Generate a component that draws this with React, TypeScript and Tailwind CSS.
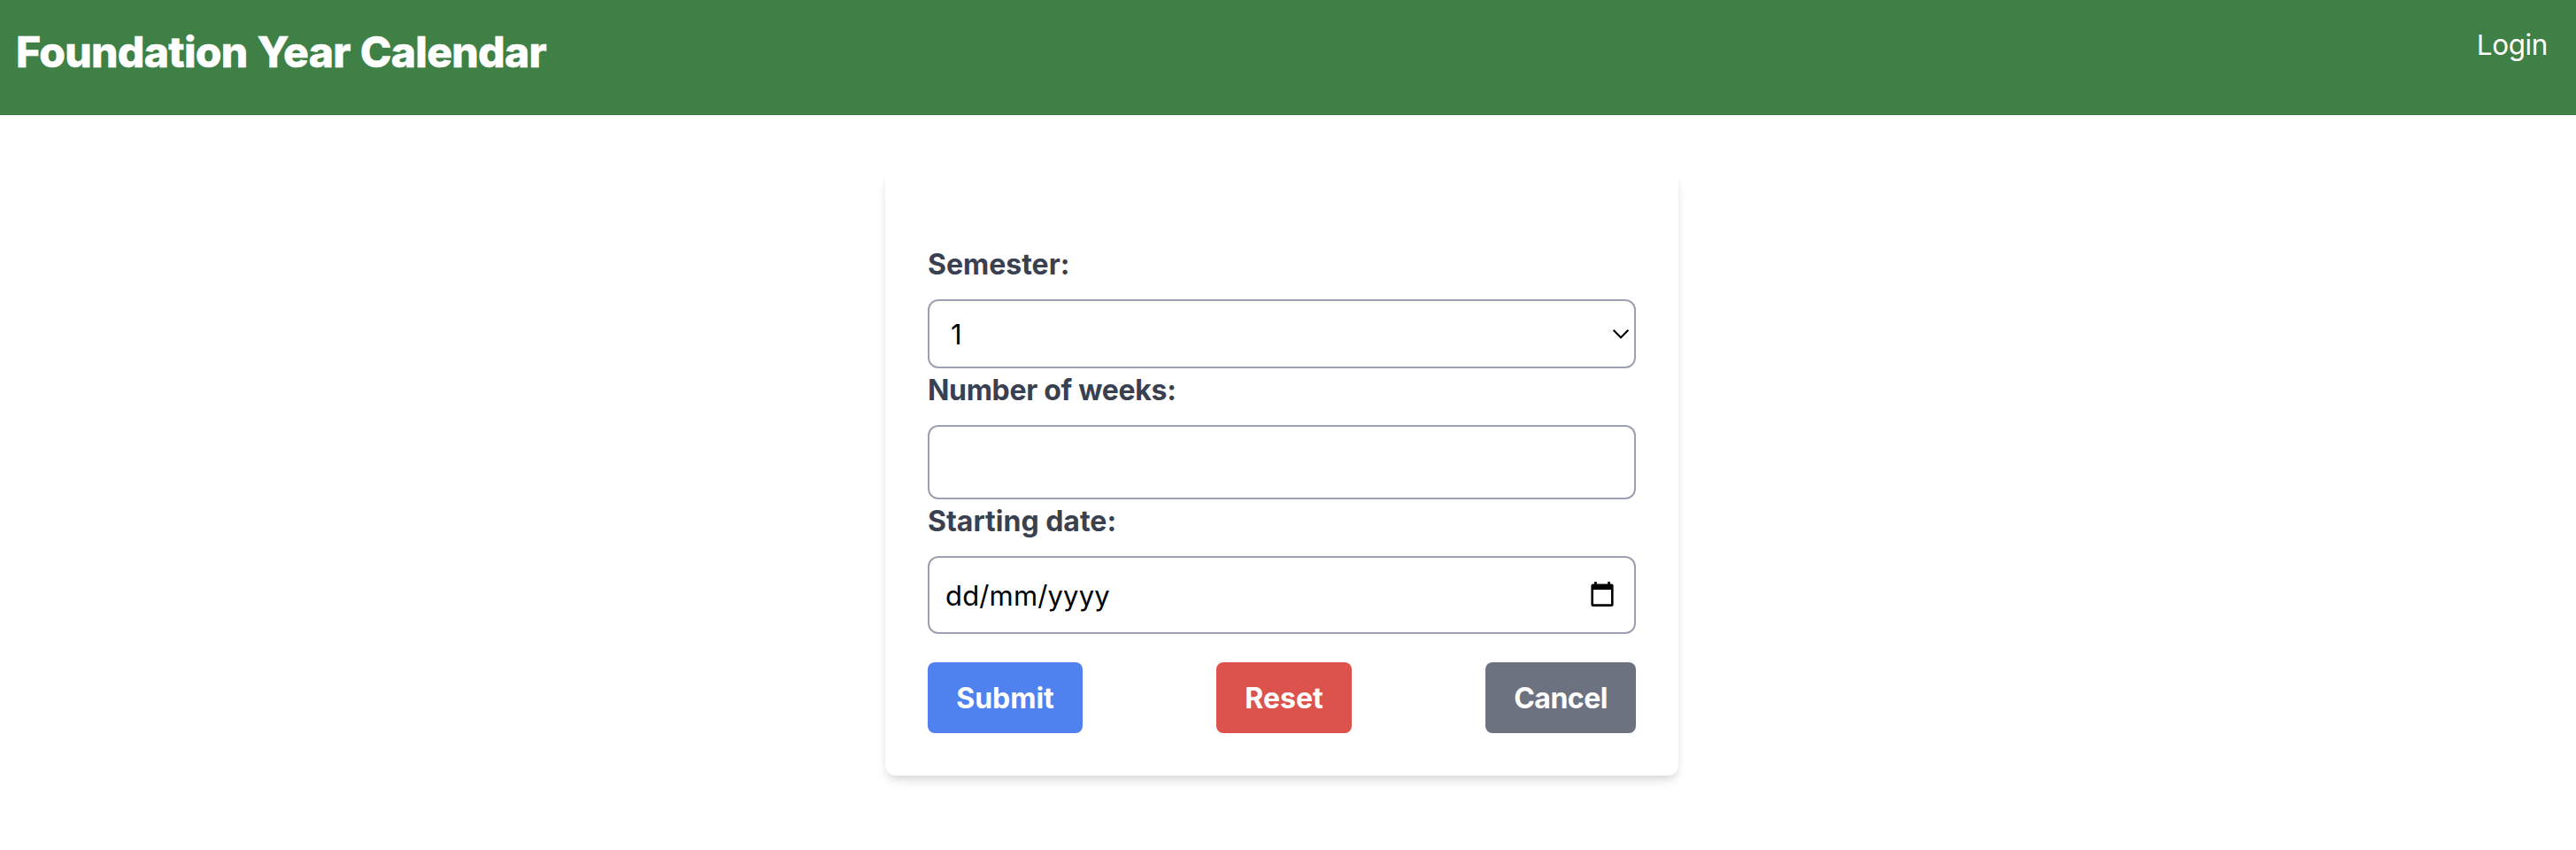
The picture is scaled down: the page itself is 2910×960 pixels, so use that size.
import type { ReactNode } from "react";

const fieldClass =
  "block w-full rounded-[12px] border-2 border-[#9ca1b0] bg-white text-[31px] leading-[48px] text-black outline-none placeholder:text-black placeholder:opacity-100";

function Label({ htmlFor, className = "", children }: { htmlFor: string; className?: string; children: ReactNode }) {
  return (
    <label htmlFor={htmlFor} className={`mb-[15px] block pt-px text-[32px] leading-[48px] font-bold text-[#394150] ${className}`}>
      {children}
    </label>
  );
}

function ActionButton({ className, children }: { className: string; children: ReactNode }) {
  return (
    <button
      type="button"
      className={`flex h-20 items-center justify-center rounded-lg pt-[2px] text-[32px] leading-[48px] font-bold text-white ${className}`}
    >
      {children}
    </button>
  );
}

function ChevronIcon() {
  return (
    <svg className="pointer-events-none absolute top-[33px] right-[7px] h-3 w-5" viewBox="0 0 20 12" fill="none">
      <path d="M1.6 1.8 L10 10.2 L18.4 1.8" stroke="#000" strokeWidth="2.1" />
    </svg>
  );
}

function CalendarIcon() {
  return (
    <svg className="pointer-events-none absolute top-[29px] right-[25px] h-7 w-[26px]" viewBox="0 0 26 28">
      <rect x="4" y="0" width="2.8" height="4" fill="#000" />
      <rect x="19.2" y="0" width="2.8" height="4" fill="#000" />
      <path
        fillRule="evenodd"
        fill="#000"
        d="M2.4 2.6H23.6Q25.6 2.6 25.6 4.6V26Q25.6 28 23.6 28H2.4Q.4 28 .4 26V4.6Q.4 2.6 2.4 2.6ZM3 9V25.3H23V9Z"
      />
    </svg>
  );
}

export default function App() {
  return (
    <div className="min-h-[960px] bg-white font-['Inter',sans-serif]">
      <header className="flex h-[130px] items-start justify-between bg-[#3e8045] pr-[32px] pl-[18px] text-white">
        <h1 className="pt-[34.5px] text-[48px] leading-none font-extrabold tracking-[-0.7px] [-webkit-text-stroke:0.5px_white] [word-spacing:1.2px]">
          Foundation Year Calendar
        </h1>
        <a href="#login" className="pt-[27px] text-[31.5px] leading-[48px] tracking-[-0.4px]">
          Login
        </a>
      </header>

      <main className="flex pt-16 pl-[1000px]">
        <form className="w-[896px] rounded-[12px] bg-white px-12 pt-20 pb-12 shadow-[0_8px_12px_-2px_rgba(0,0,0,0.1),0_4px_8px_-2px_rgba(0,0,0,0.07)]">
          <Label htmlFor="semester">Semester:</Label>
          <div className="relative">
            <select id="semester" className={`${fieldClass} h-[78px] appearance-none pt-px pl-6`} defaultValue="1">
              <option>1</option>
              <option>2</option>
            </select>
            <ChevronIcon />
          </div>

          <Label htmlFor="weeks" className="tracking-[-0.3px]">
            Number of weeks:
          </Label>
          <input id="weeks" className={`${fieldClass} h-[84px] px-[17px]`} />

          <Label htmlFor="start">Starting date:</Label>
          <div className="relative">
            <input id="start" placeholder="dd/mm/yyyy" className={`${fieldClass} h-[88px] pt-px pr-16 pl-[18px] tracking-[0.15px]`} />
            <CalendarIcon />
          </div>

          <div className="mt-8 flex justify-between">
            <ActionButton className="w-[175px] bg-[#4f82ee]">Submit</ActionButton>
            <ActionButton className="w-[152.5px] bg-[#dc524d]">Reset</ActionButton>
            <ActionButton className="w-[170px] bg-[#6c7280] tracking-[-0.5px]">Cancel</ActionButton>
          </div>
        </form>
      </main>
    </div>
  );
}
